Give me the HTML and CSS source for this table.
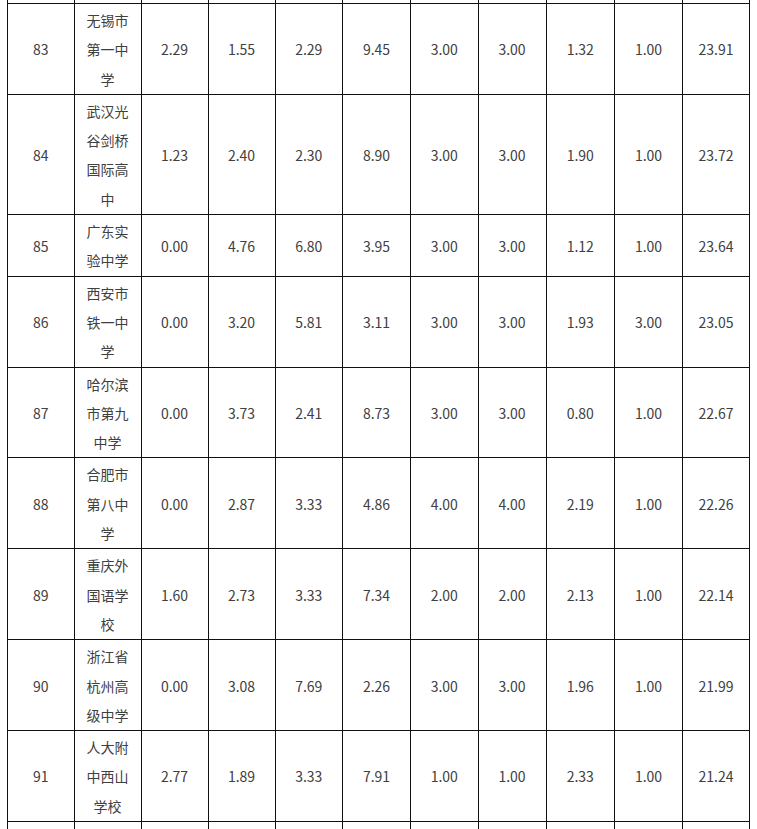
FILE: index.html
```html
<!DOCTYPE html>
<html lang="zh">
<head>
<meta charset="utf-8">
<link rel="stylesheet" href="styles.css">
</head>
<body>
<div class="page">
<table class="rank">
<colgroup>
<col class="c1"><col class="c2"><col class="c3"><col class="c4"><col class="c5"><col class="c6"><col class="c7"><col class="c8"><col class="c9"><col class="c10"><col class="c11">
</colgroup>
<tbody>
<tr class="cut"><td></td><td></td><td></td><td></td><td></td><td></td><td></td><td></td><td></td><td></td><td></td></tr>
<tr><td>83</td><td>无锡市第一中学</td><td>2.29</td><td>1.55</td><td>2.29</td><td>9.45</td><td>3.00</td><td>3.00</td><td>1.32</td><td>1.00</td><td>23.91</td></tr>
<tr><td>84</td><td>武汉光谷剑桥国际高中</td><td>1.23</td><td>2.40</td><td>2.30</td><td>8.90</td><td>3.00</td><td>3.00</td><td>1.90</td><td>1.00</td><td>23.72</td></tr>
<tr><td>85</td><td>广东实验中学</td><td>0.00</td><td>4.76</td><td>6.80</td><td>3.95</td><td>3.00</td><td>3.00</td><td>1.12</td><td>1.00</td><td>23.64</td></tr>
<tr><td>86</td><td>西安市铁一中学</td><td>0.00</td><td>3.20</td><td>5.81</td><td>3.11</td><td>3.00</td><td>3.00</td><td>1.93</td><td>3.00</td><td>23.05</td></tr>
<tr><td>87</td><td>哈尔滨市第九中学</td><td>0.00</td><td>3.73</td><td>2.41</td><td>8.73</td><td>3.00</td><td>3.00</td><td>0.80</td><td>1.00</td><td>22.67</td></tr>
<tr><td>88</td><td>合肥市第八中学</td><td>0.00</td><td>2.87</td><td>3.33</td><td>4.86</td><td>4.00</td><td>4.00</td><td>2.19</td><td>1.00</td><td>22.26</td></tr>
<tr><td>89</td><td>重庆外国语学校</td><td>1.60</td><td>2.73</td><td>3.33</td><td>7.34</td><td>2.00</td><td>2.00</td><td>2.13</td><td>1.00</td><td>22.14</td></tr>
<tr><td>90</td><td>浙江省杭州高级中学</td><td>0.00</td><td>3.08</td><td>7.69</td><td>2.26</td><td>3.00</td><td>3.00</td><td>1.96</td><td>1.00</td><td>21.99</td></tr>
<tr><td>91</td><td>人大附中西山学校</td><td>2.77</td><td>1.89</td><td>3.33</td><td>7.91</td><td>1.00</td><td>1.00</td><td>2.33</td><td>1.00</td><td>21.24</td></tr>
<tr class="next"><td></td><td></td><td></td><td></td><td></td><td></td><td></td><td></td><td></td><td></td><td></td></tr>
</tbody>
</table>
</div>
</body>
</html>
```
FILE: styles.css
```css
html, body {
  margin: 0;
  padding: 0;
  background: #ffffff;
}
.page {
  padding-left: 7px;
  overflow: hidden;
  height: 829px;
}
.rank {
  border-collapse: collapse;
  table-layout: fixed;
  width: 743px;
  font-family: "Noto Sans CJK SC", "Noto Sans", sans-serif;
  font-size: 14px;
  color: #404040;
}
.c1 { width: 66.5px; }
.c2 { width: 67px; }
.c3 { width: 67px; }
.c4 { width: 67px; }
.c5 { width: 67.5px; }
.c6 { width: 68px; }
.c7 { width: 67.5px; }
.c8 { width: 68px; }
.c9 { width: 68.5px; }
.c10 { width: 68px; }
.c11 { width: 67px; }
.rank td {
  border: 1px solid #111111;
  text-align: center;
  vertical-align: middle;
  padding: 2px 10px 0;
  line-height: 29.3px;
  word-break: break-all;
}
.rank tr.cut td {
  border-top: none;
  height: 3px;
  padding: 0;
  line-height: 0;
}
.rank tr.next td {
  height: 88px;
}
```
